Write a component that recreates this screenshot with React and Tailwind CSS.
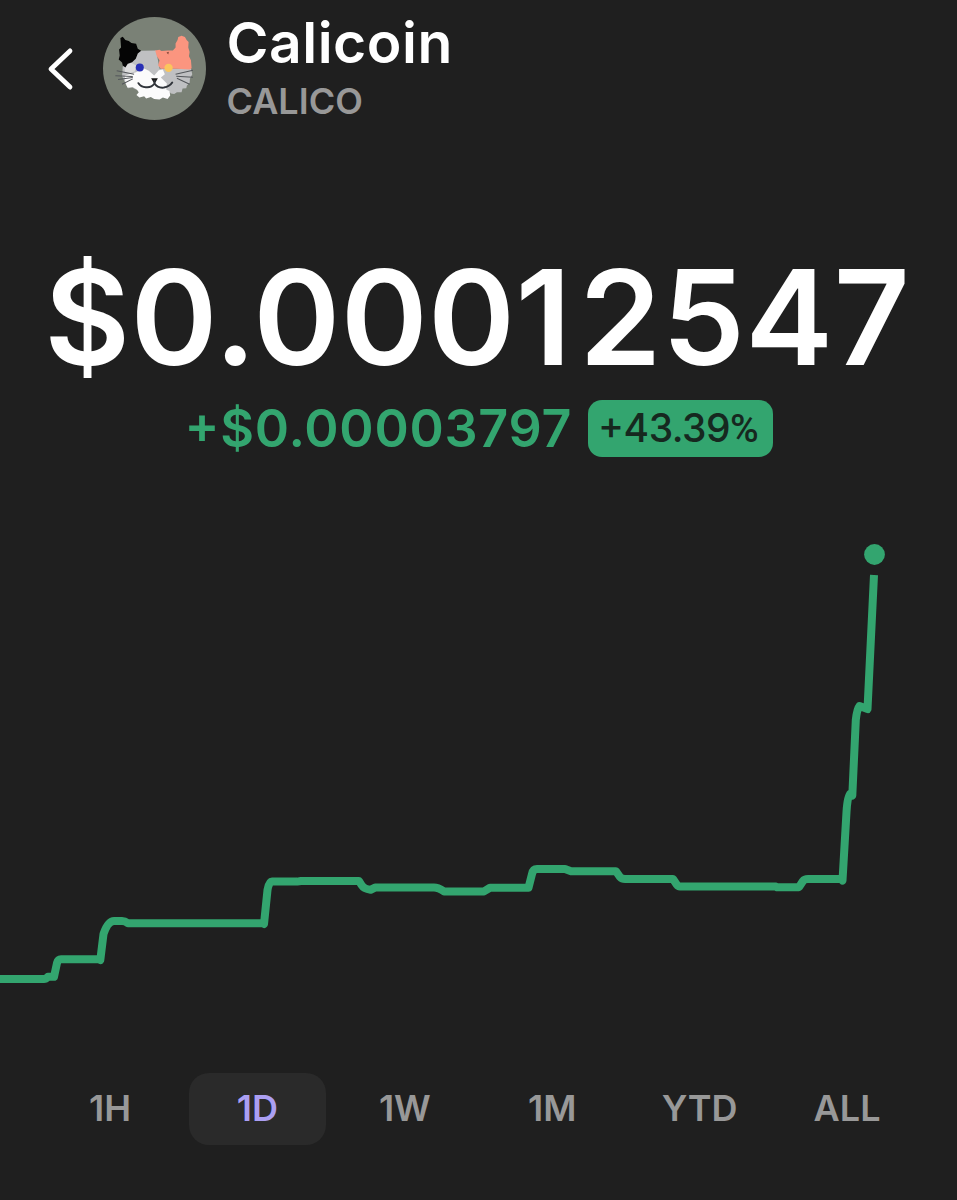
import React, { useState } from 'react';

const ranges = ['1H', '1D', '1W', '1M', 'YTD', 'ALL'];

const linePath =
  'M0 979H44Q46 979 48 976.8H54L57 963Q58 959.3 61 959.3H99L100.3 960L103.5 934Q108 921 114 921H122Q125 921 128 923.2H263L264 924L267.5 890Q269 881.6 272 881.6H297L301 881H359L361.5 885Q364 889 370.5 889.8L375 887.6H434Q438 887.6 444 891.4H484L490 887.8H528.5L532 874Q533 869 537 869H565L571 871.3H616L620 877Q622 879 625 879H673L677 885Q678 886.6 680 886.6H776L777 887.2H799L803 881Q804.5 878.9 808 878.9H841L842.5 880.5L846.5 812Q847.5 796 850.5 793.5L852.3 795.5L855.8 720Q857 709 859.5 706L867.5 709L874 575';

const Avatar = () => (
  <svg className="size-[103px] rounded-full" viewBox="219 51 308 308">
    <rect x="219" y="51" width="308" height="308" fill="#7a8176" />
    {/* Face */}
    <path d="M290 190L304 180L320 158L334 152L378 151L388 206L482 206L486 222L479 236L478 248L470 256L468 264L457 265L454 276L440 276L432 281L422 280L416 272L402 268L340 270L318 268L306 262L294 264L288 254L282 240L276 228L278 200Z" fill="#bfc0c2" />
    <path d="M318 216L340 204L356 212L372 226L386 210L398 208L404 222L392 232L410 250L408 268L418 272L420 286L412 296L398 292L388 298L372 296L362 290L348 295L342 288L328 292L319 284L326 276L320 268L308 260L292 262L286 246L284 226Z" fill="#fbfbfb" />
    <path d="M284 196L304 188L318 196L314 214L296 220L284 214Z" fill="#dddddd" />
    {/* Ears */}
    <path d="M271 114L278 110L286 120L296 123L304 129L318 131L323 146L333 152L323 160L317 176L306 186L293 191L286 202L278 196L276 187L266 178L269 166L267 148L273 142Z" fill="#050505" />
    <path d="M375 151L388 149L394 153L412 151L428 151L436 142L436 130L442 120L444 111L454 107L464 111L469 120L475 126L474 142L478 156L476 168L482 180L484 204L478 208L440 206H392L384 196L388 180L380 168Z" fill="#fb957f" />
    <path d="M409 157L416 155L414 163Z" fill="#7d4237" />
    {/* Eyes */}
    <circle cx="329" cy="202" r="12" fill="#2930b5" />
    <circle cx="415" cy="203" r="12.5" fill="#fbc65c" />
    {/* Nose, mouth and whiskers */}
    <path d="M363 234H383L376 247H370Z" fill="#171717" />
    <path d="M373 242V250Q364 263 347 261Q332 260 325 249M373 250Q382 264 401 262Q418 259 426 247" fill="none" stroke="#30343a" strokeWidth="6" strokeLinecap="round" />
    <path d="M260 212L312 222M256 227L308 229M264 238L308 232M276 252L308 236M436 222L488 210M438 228L488 231M440 234L478 252" fill="none" stroke="#53565a" strokeWidth="3" />
  </svg>
);

const PriceChart = () => (
  <svg className="mt-[43px] h-[500px] w-full" viewBox="0 500 957 500">
    <path d={linePath} fill="none" stroke="#33a56f" strokeWidth="8" strokeLinejoin="round" />
    <circle cx="874.5" cy="554.5" r="10.4" fill="#33a56f" />
  </svg>
);

const App = () => {
  const [range, setRange] = useState('1D');

  return (
    <div className="flex h-[1200px] w-[957px] flex-col overflow-hidden bg-[#1f1f1f] font-['Inter',sans-serif] font-semibold text-white">
      {/* Header */}
      <header className="flex h-[137px] items-center pl-[46px]">
        <button className="mr-[25px]">
          <svg className="h-[46px] w-8" viewBox="0 0 32 46" fill="none" stroke="white" strokeWidth="4.8" strokeLinecap="round" strokeLinejoin="round">
            <path d="M24 4.9L5 23L24 41.1" />
          </svg>
        </button>
        <Avatar />
        <div className="ml-[20.5px] flex flex-col">
          <h1 className="text-[57px] leading-[65px] tracking-[0.5px]">Calicoin</h1>
          <p className="text-[36px] leading-[53px] text-[#989898]">CALICO</p>
        </div>
      </header>

      {/* Price */}
      <section className="mt-[100px] flex flex-col">
        <div className="ml-[44.3px] text-[132px] leading-[160px] tracking-[0.4px] whitespace-nowrap">
          $0.000<span className="mr-[7.5px]">1</span>2547
        </div>
        <div className="mt-[3px] ml-[184.5px] flex h-[57px] items-center [font-feature-settings:'case']">
          <span className="w-[403px] text-[52px] leading-[57px] font-[560] tracking-[0.75px] text-[#33a56f]">+$0.00003797</span>
          <span className="h-[57px] w-[185px] rounded-[14px] bg-[#33a56f] pl-[10.5px] text-[39px] leading-[55px] font-medium tracking-[-0.5px] text-[#16281f]">
            +43.39<span className="font-['Roboto',sans-serif]">%</span>
          </span>
        </div>
      </section>

      <PriceChart />

      {/* Time ranges */}
      <nav className="mt-[73px] flex gap-[10.4px] pl-[41.6px]">
        {ranges.map((item) => (
          <button
            key={item}
            onClick={() => setRange(item)}
            className={`h-[72px] w-[137px] rounded-[20px] pb-[2px] text-[36px] ${item === range ? 'bg-[#2a2a2a] text-[#ab9ff2]' : 'text-[#989898]'}`}
          >
            {item}
          </button>
        ))}
      </nav>
    </div>
  );
};

export default App;
